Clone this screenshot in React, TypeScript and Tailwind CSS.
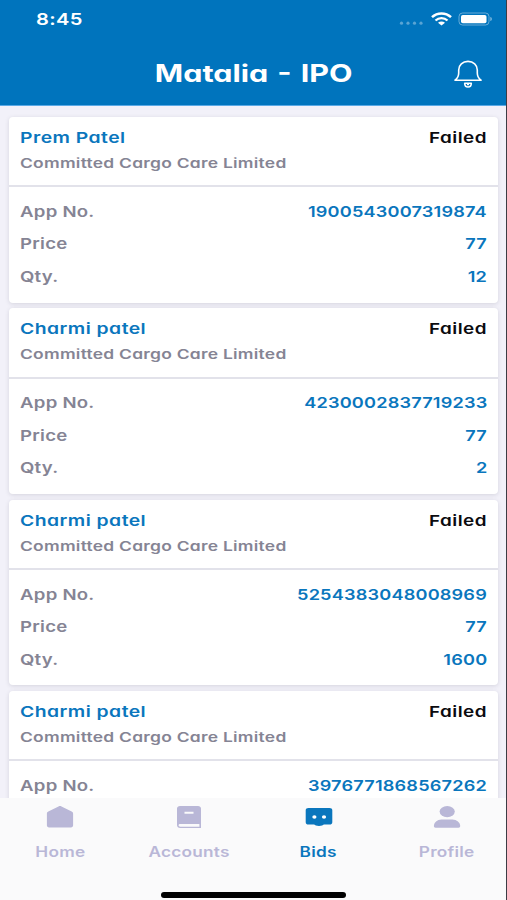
import React, { useState } from 'react';

const bids = [
  { name: 'Prem Patel', company: 'Committed Cargo Care Limited', status: 'Failed', appNo: '1900543007319874', price: '77', qty: '12' },
  { name: 'Charmi patel', company: 'Committed Cargo Care Limited', status: 'Failed', appNo: '4230002837719233', price: '77', qty: '2' },
  { name: 'Charmi patel', company: 'Committed Cargo Care Limited', status: 'Failed', appNo: '5254383048008969', price: '77', qty: '1600' },
  { name: 'Charmi patel', company: 'Committed Cargo Care Limited', status: 'Failed', appNo: '3976771868567262', price: '77', qty: '1600' },
];

function HomeIcon() {
  return (
    <svg width="28" height="24" viewBox="0 0 28 24" fill="currentColor">
      <path d="M14 1c.5 0 1 .1 1.500.4l10.200 5.100c.9.500 1.400 1.100 1.400 2v12.100c0 1.100-.9 1.900-2.200 1.900H3.100c-1.300 0-2.200-.8-2.200-1.900V8.500c0-.9.500-1.500 1.400-2l10.200-5.100c.5-.3 1-.4 1.500-.4z" />
    </svg>
  );
}

function AccountsIcon() {
  return (
    <svg width="28" height="24" viewBox="0 0 28 24">
      <path fill="currentColor" fillRule="evenodd" d="M5 1h18c1.700 0 3 1 3 2.400V23H5.200C3.400 23 2 21.800 2 20.300V3.400C2 2 3.300 1 5 1zM5.300 19c-1 0-1.700.5-1.700 1.300s.7 1.400 1.700 1.400h19.100V19zM9.500 6.800v1.900h9V6.800z" />
    </svg>
  );
}

function BidsIcon() {
  return (
    <svg width="28" height="24" viewBox="0 0 28 24">
      <path fill="currentColor" d="M3.500 3h21c1.700 0 2.800.9 2.800 2.300v12c0 1.400-1.100 2.300-2.800 2.300h-5.700c-.8.900-2.300 1.400-4.800 1.400s-4-.5-4.800-1.400H3.500c-1.700 0-2.800-.9-2.800-2.300v-12C.7 3.900 1.800 3 3.500 3z" />
      <ellipse cx="9.400" cy="12" rx="2.100" ry="1.800" fill="#fff" />
      <ellipse cx="19" cy="12" rx="2.100" ry="1.800" fill="#fff" />
    </svg>
  );
}

function ProfileIcon() {
  return (
    <svg width="28" height="24" viewBox="0 0 28 24" fill="currentColor">
      <ellipse cx="14.200" cy="6.600" rx="7.600" ry="5.600" />
      <path d="M8.500 14.400h10.800c4.500 0 7.900 3 7.900 6.600 0 1-.6 1.700-1.600 1.700H2.500c-1 0-1.600-.7-1.600-1.700 0-3.600 3.200-6.600 7.600-6.600z" />
    </svg>
  );
}

const tabs = [
  { id: 'Home', Icon: HomeIcon, box: 'w-[124px] pr-[4px]' },
  { id: 'Accounts', Icon: AccountsIcon, box: 'w-[130px]' },
  { id: 'Bids', Icon: BidsIcon, box: 'w-[129px]' },
  { id: 'Profile', Icon: ProfileIcon, box: 'w-[123px] pl-[5px]' },
];

function StatusBar() {
  return (
    <div className="flex h-[38px] items-center justify-between pl-[36px] pr-[14px]">
      <span className="origin-left scale-x-[1.220] text-[16.500px] font-semibold tracking-[0.3px]">8:45</span>
      <div className="flex items-center">
        <svg width="24" height="14" viewBox="0 0 24 14" fill="#fff" fillOpacity="0.35">
          <circle cx="2.500" cy="11.200" r="1.600" />
          <circle cx="9" cy="11.200" r="1.600" />
          <circle cx="15.500" cy="11.200" r="1.600" />
          <circle cx="22" cy="11.200" r="1.600" />
        </svg>
        <svg className="ml-[8px]" width="21" height="14" viewBox="0 0 21 14" fill="none" stroke="#fff">
          <path d="M1 5.200C6.300.1 14.700.1 20 5.200" strokeWidth="2.500" />
          <path d="M4.500 8.500c3.400-3.100 8.600-3.100 12 0" strokeWidth="2.300" />
          <path d="M7 10.700c2-1.700 5-1.700 7 0L10.500 13.500z" fill="#fff" stroke="none" />
        </svg>
        <svg className="ml-[6px]" width="34" height="14" viewBox="0 0 34 14">
          <rect x="1" y="1" width="30" height="12" rx="3.500" fill="none" stroke="#fff" strokeOpacity="0.4" />
          <rect x="3" y="3" width="25.500" height="8.200" rx="1.800" fill="#fff" />
          <path d="M32.300 5c1.200.4 1.500 1.100 1.500 2s-.3 1.600-1.500 2z" fill="#fff" fillOpacity="0.5" />
        </svg>
      </div>
    </div>
  );
}

function BellIcon() {
  return (
    <svg width="28" height="29" viewBox="0 0 28 29" fill="none" stroke="#fff" strokeWidth="1.600" strokeLinejoin="round">
      <path d="M1 20.200c2.800-2 3.700-3.800 3.700-7.200v-3C4.700 5 8.600 1.400 14 1.400S23.300 5 23.300 10v3c0 3.400.9 5.200 3.700 7.200z" />
      <path d="M10.700 23.200h6.600c0 2.300-1.300 3.800-3.300 3.800s-3.300-1.500-3.300-3.800z" />
      <path d="M13 24.500h2" />
    </svg>
  );
}

function Row({ label, value }: { label: string; value: string }) {
  return (
    <div className="flex h-[32.600px] items-center justify-between">
      <span className="origin-left scale-x-[1.240] text-[15px] font-semibold tracking-[0.2px] text-[#858494]">{label}</span>
      <span className="origin-right scale-x-[1.210] text-[15px] font-semibold tracking-[0.150px] text-[#0a76bd]">{value}</span>
    </div>
  );
}

function BidCard({ bid }: { bid: (typeof bids)[number] }) {
  return (
    <div className="h-[185.600px] shrink-0 rounded-[4px] bg-white shadow-[0_1px_4px_rgba(60,60,80,0.16)]">
      <div className="h-[70.400px] border-b-2 border-[#e2e2ea] pl-[11px] pr-[11px] pt-[8.600px]">
        <div className="flex h-[25px] items-center justify-between">
          <span className="origin-left scale-x-[1.290] text-[15px] font-semibold tracking-[0.350px] text-[#0a76bd]">{bid.name}</span>
          <span className="origin-right scale-x-[1.260] text-[15px] font-semibold tracking-[0.350px] text-[#0b0b0f]">{bid.status}</span>
        </div>
        <div className="flex h-[25px] items-center">
          <span className="origin-left scale-x-[1.290] whitespace-nowrap text-[13.500px] font-semibold tracking-[0.2px] text-[#858494]">{bid.company}</span>
        </div>
      </div>
      <div className="pl-[11px] pr-[11px] pt-[8.400px]">
        <Row label="App No." value={bid.appNo} />
        <Row label="Price" value={bid.price} />
        <Row label="Qty." value={bid.qty} />
      </div>
    </div>
  );
}

export default function App() {
  const [active, setActive] = useState('Bids');

  return (
    <div className="flex h-[900px] w-[507px] flex-col overflow-hidden border-r border-[#3c3c44] bg-[#f2f1f9] font-['Inter','Liberation_Sans',sans-serif] [font-feature-settings:'cv11']">
      {/* Header */}
      <header className="h-[106px] shrink-0 border-b border-[#5aa9e6] bg-[#0074bd] text-white">
        <StatusBar />
        <div className="grid h-[70px] grid-cols-[60px_1fr_60px] items-center">
          <div />
          <h1 className="scale-x-[1.270] pl-[1px] pt-[2px] text-center text-[24px] font-bold [word-spacing:1.500px]">Matalia - IPO</h1>
          <button className="pl-[8px] pt-[2px]" aria-label="Notifications">
            <BellIcon />
          </button>
        </div>
      </header>

      {/* Bid list */}
      <main className="flex min-h-0 flex-1 flex-col gap-[5.750px] overflow-hidden pl-[9px] pr-[8px] pt-[11px]">
        {bids.map((bid) => (
          <BidCard key={bid.appNo} bid={bid} />
        ))}
      </main>

      {/* Bottom tabs */}
      <nav className="flex h-[102px] shrink-0 flex-col items-center bg-[#fafafb]">
        <div className="flex h-[94px] w-full">
          {tabs.map(({ id, Icon, box }) => (
            <button
              key={id}
              onClick={() => setActive(id)}
              className={`flex shrink-0 flex-col items-center pt-[7px] ${box} ${active === id ? 'text-[#0a76bd]' : 'text-[#b9b7d7]'}`}
            >
              <Icon />
              <span className="mt-[12px] scale-x-[1.230] text-[14px] font-semibold tracking-[0.2px]">{id}</span>
            </button>
          ))}
        </div>
        <div className="h-[6px] w-[185px] shrink-0 rounded-full bg-black" />
      </nav>
    </div>
  );
}
